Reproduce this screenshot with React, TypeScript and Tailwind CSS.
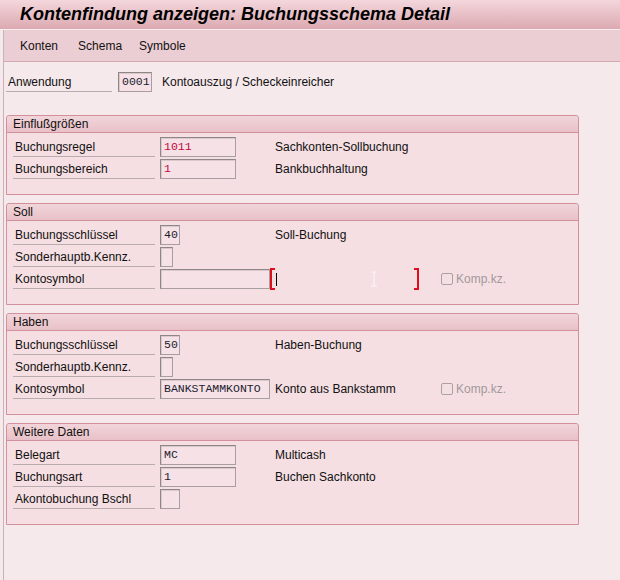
import React from "react";

const sans = { fontFamily: '"Liberation Sans", Arial, sans-serif' };
const mono = { fontFamily: '"Liberation Mono", "Courier New", monospace' };

function Field({ value = "", w, tone = "dark" }: { value?: string; w: string; tone?: "dark" | "red" }) {
  return (
    <div
      className={`${w} h-[20px] shrink-0 border border-[#a79ea1] border-t-[#8f8688] border-l-[#8f8688] bg-[#f6e2e6] shadow-[inset_1px_1px_0_#d9c9cc] flex items-center pl-[3px] text-[11.5px] ${
        tone === "red" ? "text-[#c4073a]" : "text-[#1b1b2e]"
      }`}
      style={mono}
    >
      {value}
    </div>
  );
}

function Label({ text }: { text: string }) {
  return (
    <div className="w-[142px] h-[20px] shrink-0 flex items-center pl-[2px] border-b border-[#b9acaf] text-[12px] text-[#111]">
      {text}
    </div>
  );
}

function Row({ children }: { children: React.ReactNode }) {
  return <div className="flex items-center h-[22px]">{children}</div>;
}

function Slot({ children, w = "w-[115px]" }: { children: React.ReactNode; w?: string }) {
  return <div className={`${w} ml-[5px] shrink-0 flex items-center`}>{children}</div>;
}

function Desc({ text }: { text?: string }) {
  return <div className="w-[166px] shrink-0 text-[12px] text-[#111] whitespace-nowrap">{text}</div>;
}

function KompKz() {
  return (
    <div className="flex items-center text-[12px] text-[#a1989b]">
      <span className="w-[12px] h-[12px] border border-[#aba1a4] rounded-[2px] bg-[#f4dfe3] mr-[3px]" />
      Komp.kz.
    </div>
  );
}

function Group({ title, children }: { title: string; children: React.ReactNode }) {
  return (
    <div className="mx-[2px] border border-[#d3909c] rounded-t-[3px] bg-[#f5dfe3]">
      <div className="h-[17px] flex items-center pl-[6px] text-[12px] text-[#111] bg-gradient-to-b from-[#f1d5da] to-[#e9c1c8] border-b border-[#d3909c] rounded-t-[3px]">
        {title}
      </div>
      <div className="pt-[3px] pb-[14px] pl-[6px]">{children}</div>
    </div>
  );
}

export default function App() {
  return (
    <div className="w-[620px] h-[580px] overflow-hidden bg-[#f6e9ec]" style={sans}>
      <div className="h-[30px] flex items-center pl-[20px] bg-gradient-to-b from-[#f3d7dc] to-[#dca9b1] border-b border-[#fbeef0]">
        <h1 className="text-[18px] font-bold italic text-black">
          Kontenfindung anzeigen: Buchungsschema Detail
        </h1>
      </div>

      <div className="ml-[3px] h-[550px] border-l border-[#c7b3b7]">
        <div className="h-[32px] flex items-center pl-[16px] bg-[#ebcdd4] border-b border-[#d4a7b0] text-[12px] text-[#111]">
          <span>Konten</span>
          <span className="ml-[20px]">Schema</span>
          <span className="ml-[17px]">Symbole</span>
        </div>

        <div className="flex items-center h-[20px] mt-[10px] pl-[2px]">
          <div className="w-[106px] h-[20px] flex items-center pl-[2px] border-b border-[#b9acaf] text-[12px] text-[#111]">
            Anwendung
          </div>
          <div className="ml-[6px]">
            <Field value="0001" w="w-[34px]" />
          </div>
          <span className="ml-[10px] text-[12px] text-[#111]">Kontoauszug / Scheckeinreicher</span>
        </div>

        <div className="mt-[23px] mr-[39px] flex flex-col gap-[8px]">
          <Group title="Einflußgrößen">
            <Row>
              <Label text="Buchungsregel" />
              <Slot><Field value="1011" w="w-[76px]" tone="red" /></Slot>
              <Desc text="Sachkonten-Sollbuchung" />
            </Row>
            <Row>
              <Label text="Buchungsbereich" />
              <Slot><Field value="1" w="w-[76px]" tone="red" /></Slot>
              <Desc text="Bankbuchhaltung" />
            </Row>
          </Group>

          <Group title="Soll">
            <Row>
              <Label text="Buchungsschlüssel" />
              <Slot><Field value="40" w="w-[20px]" /></Slot>
              <Desc text="Soll-Buchung" />
            </Row>
            <Row>
              <Label text="Sonderhauptb.Kennz." />
              <Slot><Field w="w-[13px]" /></Slot>
            </Row>
            <Row>
              <Label text="Kontosymbol" />
              <Slot w="w-[110px]"><Field w="w-[110px]" /></Slot>
              {/* focused empty text field with red corner brackets */}
              <div className="relative w-[149px] h-[22px] shrink-0 flex justify-between">
                <span className="w-[5px] h-[22px] border-l-2 border-t-2 border-b-2 border-[#e0101a]" />
                <span className="absolute left-[6px] top-[5px] w-px h-[13px] bg-black" />
                <svg className="absolute left-[100px] top-[3px]" width="8" height="16" viewBox="0 0 8 16">
                  <path d="M1 1h6M4 1v14M1 15h6" stroke="#fbf4f5" strokeWidth="1.2" fill="none" />
                </svg>
                <span className="w-[5px] h-[22px] border-r-2 border-t-2 border-b-2 border-[#e0101a]" />
              </div>
              <div className="ml-[22px]">
                <KompKz />
              </div>
            </Row>
          </Group>

          <Group title="Haben">
            <Row>
              <Label text="Buchungsschlüssel" />
              <Slot><Field value="50" w="w-[20px]" /></Slot>
              <Desc text="Haben-Buchung" />
            </Row>
            <Row>
              <Label text="Sonderhauptb.Kennz." />
              <Slot><Field w="w-[13px]" /></Slot>
            </Row>
            <Row>
              <Label text="Kontosymbol" />
              <Slot w="w-[110px]"><Field value="BANKSTAMMKONTO" w="w-[110px]" /></Slot>
              <div className="w-[171px] shrink-0 pl-[5px] text-[12px] text-[#111]">Konto aus Bankstamm</div>
              <KompKz />
            </Row>
          </Group>

          <Group title="Weitere Daten">
            <Row>
              <Label text="Belegart" />
              <Slot><Field value="MC" w="w-[76px]" /></Slot>
              <Desc text="Multicash" />
            </Row>
            <Row>
              <Label text="Buchungsart" />
              <Slot><Field value="1" w="w-[76px]" /></Slot>
              <Desc text="Buchen Sachkonto" />
            </Row>
            <Row>
              <Label text="Akontobuchung Bschl" />
              <Slot><Field w="w-[20px]" /></Slot>
            </Row>
          </Group>
        </div>
      </div>
    </div>
  );
}
